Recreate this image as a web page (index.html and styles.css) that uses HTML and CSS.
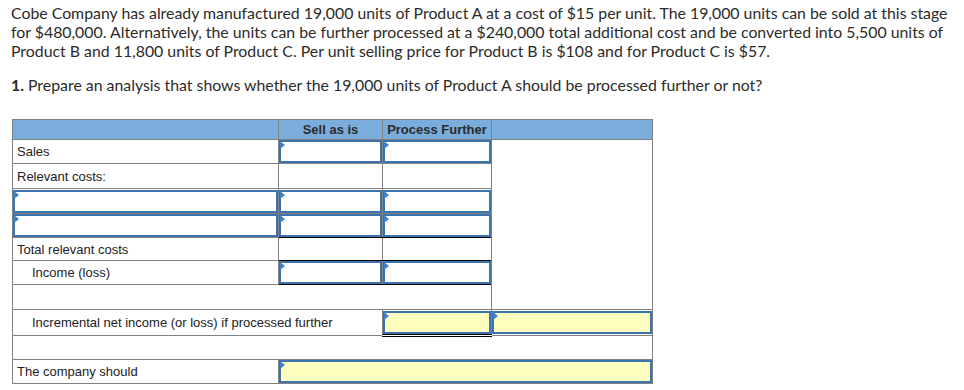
FILE: index.html
```html
<!DOCTYPE html>
<html>
<head>
<meta charset="utf-8">
<link rel="stylesheet" href="styles.css">
</head>
<body>
<div class="page">
  <p class="intro">Cobe Company has already manufactured 19,000 units of Product A at a cost of $15 per unit. The 19,000 units can be sold at this stage<br>for $480,000. Alternatively, the units can be further processed at a $240,000 total additional cost and be converted into 5,500 units of<br>Product B and 11,800 units of Product C. Per unit selling price for Product B is $108 and for Product C is $57.</p>
  <p class="question"><b>1.</b> Prepare an analysis that shows whether the 19,000 units of Product A should be processed further or not?</p>

  <table class="grid">
    <colgroup>
      <col class="c1"><col class="c2"><col class="c3"><col class="c4">
    </colgroup>
    <tr class="head">
      <th></th><th>Sell as is</th><th>Process Further</th><th></th>
    </tr>
    <tr class="h23">
      <td class="label">Sales</td>
      <td class="in"><div class="box"></div></td>
      <td class="in"><div class="box"></div></td>
      <td class="blank" rowspan="7"></td>
    </tr>
    <tr class="h25">
      <td class="label">Relevant costs:</td>
      <td></td><td></td>
    </tr>
    <tr class="h25">
      <td class="in"><div class="box"></div></td>
      <td class="in"><div class="box"></div></td>
      <td class="in"><div class="box"></div></td>
    </tr>
    <tr class="h24">
      <td class="in"><div class="box"></div></td>
      <td class="in underline"><div class="box"></div></td>
      <td class="in underline"><div class="box"></div></td>
    </tr>
    <tr class="h23">
      <td class="label">Total relevant costs</td>
      <td class="underline"></td><td class="underline"></td>
    </tr>
    <tr class="h24">
      <td class="label indent">Income (loss)</td>
      <td class="in underline"><div class="box"></div></td>
      <td class="in underline"><div class="box"></div></td>
    </tr>
    <tr class="h25">
      <td colspan="3"></td>
    </tr>
    <tr class="h26">
      <td class="label indent" colspan="2">Incremental net income (or loss) if processed further</td>
      <td class="in dbl"><div class="box yellow"></div></td>
      <td class="in"><div class="box yellow"></div></td>
    </tr>
    <tr class="h24">
      <td colspan="4"></td>
    </tr>
    <tr class="h24">
      <td class="label">The company should</td>
      <td class="in" colspan="3"><div class="box yellow"></div></td>
    </tr>
  </table>
</div>
</body>
</html>
```

FILE: styles.css
```css
html, body {
  margin: 0;
  padding: 0;
  background: #ffffff;
}

.page {
  padding: 3px 0 0 11px;
}

.intro, .question {
  margin: 0;
  font-family: "Lato", "Open Sans", sans-serif;
  font-size: 15.85px;
  line-height: 19px;
  color: #2b2b2b;
  white-space: nowrap;
}

.question {
  margin-top: 15px;
}

.question b {
  font-weight: 700;
}

.grid {
  margin-top: 25px;
  margin-left: 1px;
  border-collapse: collapse;
  table-layout: fixed;
  width: 641px;
  font-family: "Liberation Sans", Arial, sans-serif;
  font-size: 13px;
  color: #222;
}

.c1 { width: 266px; }
.c2 { width: 104px; }
.c3 { width: 109px; }
.c4 { width: 161px; }

.grid tr.head { height: 20px; }
.grid tr.h23 { height: 23px; }
.grid tr.h24 { height: 24px; }
.grid tr.h25 { height: 25px; }
.grid tr.h26 { height: 26px; }

.grid th,
.grid td {
  border: 1px solid #808080;
  padding: 0;
}

.grid .head th {
  background: #7aaddc;
  font-weight: bold;
  font-size: 13px;
  color: #2a2a2a;
  text-align: center;
}

.grid td.label {
  padding-left: 4px;
  text-align: left;
  vertical-align: middle;
}

.grid td.indent {
  padding-left: 19px;
}

.grid td.in {
  padding: 0;
  vertical-align: middle;
}

.box {
  position: relative;
  height: 19px;
  border: 2px solid #3b73ad;
  background: #fff;
}

.box::before {
  content: "";
  position: absolute;
  left: -1px;
  top: -1px;
  border-top: 4px solid transparent;
  border-bottom: 4px solid transparent;
  border-left: 5px solid #3d82cc;
}

.box.yellow {
  background: #ffffbf;
}

.grid td.underline {
  border-bottom: 1px solid #000;
}

.grid td.dbl {
  border-bottom: 3px double #000;
}
```
